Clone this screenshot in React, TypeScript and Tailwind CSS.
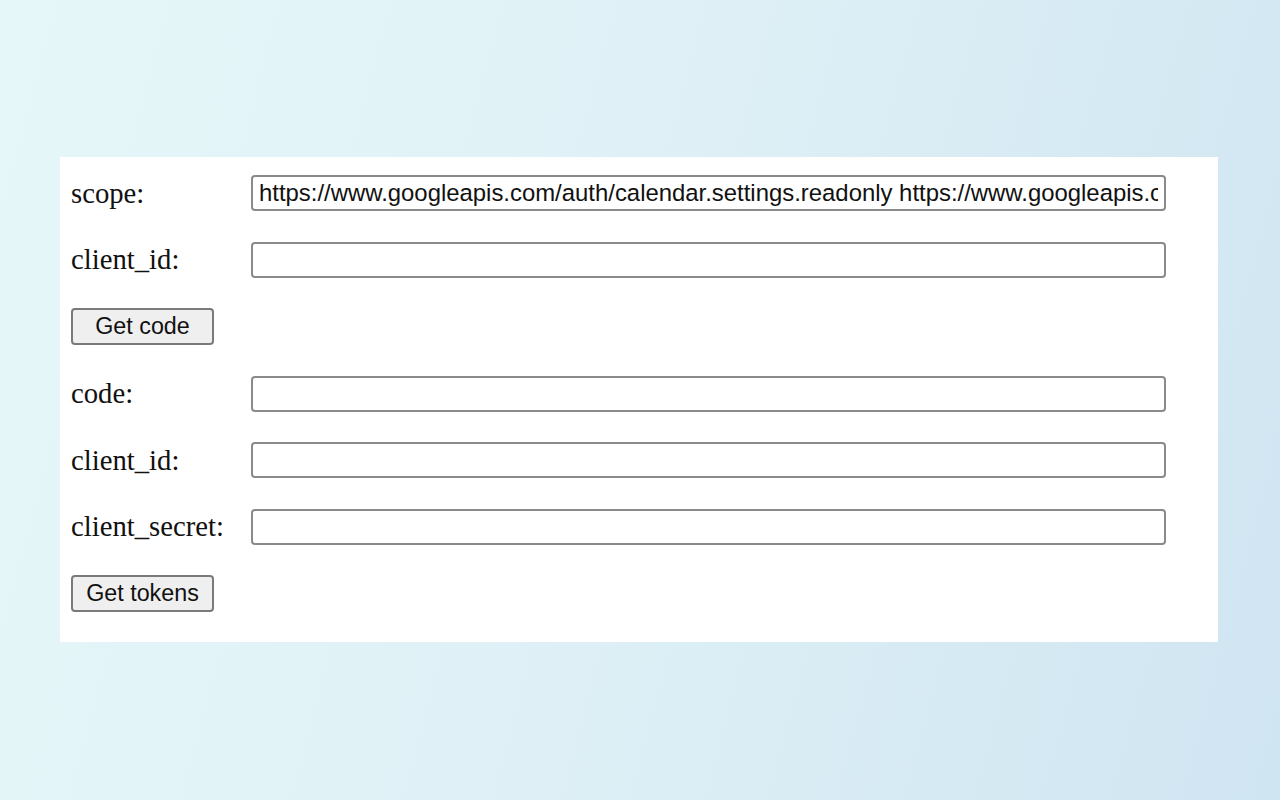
import React from "react";

const SCOPE =
  "https://www.googleapis.com/auth/calendar.settings.readonly https://www.googleapis.com/auth/calendar.events.readonly";

function Field({ label, value = "" }: { label: string; value?: string }) {
  return (
    <div className="flex items-center h-[36px]">
      <label className="w-[180px] shrink-0 text-[28.7px] leading-none text-[#111] font-['Liberation_Serif',serif]">
        {label}
      </label>
      <input
        type="text"
        defaultValue={value}
        className="w-[915px] h-[36px] border-2 border-[#8a8a8a] rounded-[4px] bg-white px-[6px] text-[23.9px] text-[#111] font-['Liberation_Sans',Arial,sans-serif] outline-none"
      />
    </div>
  );
}

function Btn({ children }: { children: React.ReactNode }) {
  return (
    <div className="flex items-center h-[37px]">
      <button className="w-[143px] h-[37px] border-2 border-[#7a7a7a] rounded-[4px] bg-[#efefef] text-[23.3px] leading-none text-[#111] font-['Liberation_Sans',Arial,sans-serif]">
        {children}
      </button>
    </div>
  );
}

export default function App() {
  return (
    <div className="w-[1280px] h-[800px] overflow-hidden bg-[linear-gradient(105deg,#e6f7f9_0%,#dff1f6_45%,#d0e5f2_100%)] pt-[157px] pl-[60px]">
      <div className="w-[1158px] h-[485px] bg-white px-[11px] pt-[18px] flex flex-col gap-[30.5px]">
        <Field label="scope:" value={SCOPE} />
        <Field label="client_id:" />
        <Btn>Get code</Btn>
        <Field label="code:" />
        <Field label="client_id:" />
        <Field label="client_secret:" />
        <Btn>Get tokens</Btn>
      </div>
    </div>
  );
}
